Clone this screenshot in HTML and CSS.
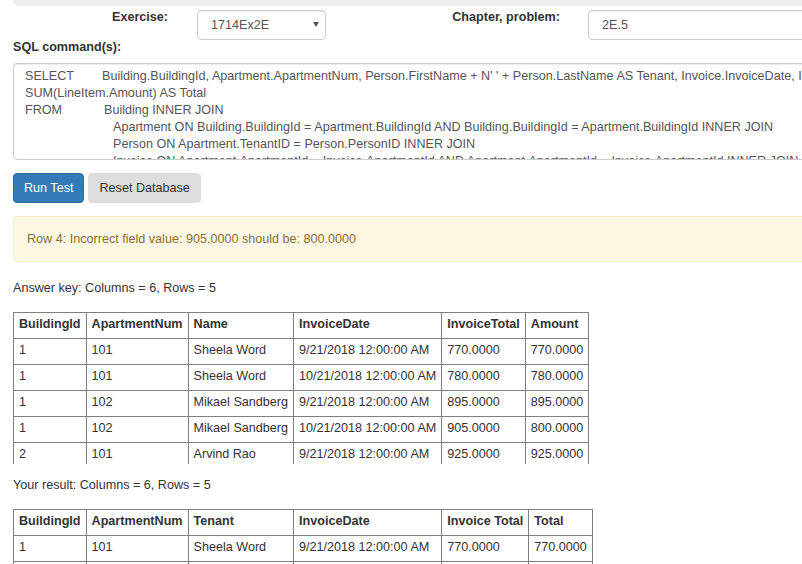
FILE: index.html
```html
<!DOCTYPE html>
<html lang="en">
<head>
<meta charset="utf-8">
<title>SQL Exercise</title>
<link rel="stylesheet" href="styles.css">
</head>
<body>
<div class="page">
  <div class="well-end"></div>
  <div class="form-row">
    <label class="label label-ex">Exercise:</label>
    <div class="select-wrap">
      <select class="select"><option>1714Ex2E</option></select>
      <svg class="caret" width="6" height="5" viewBox="0 0 6 5"><path d="M0 0H6L3 5Z" fill="#555"/></svg>
    </div>
    <label class="label label-ch">Chapter, problem:</label>
    <input class="input" type="text" value="2E.5">
  </div>
  <div class="sql-label">SQL command(s):</div>
  <div class="sql-box">
    <div class="ln"><span class="kw1">SELECT</span>Building.BuildingId, Apartment.ApartmentNum, Person.FirstName + N' ' + Person.LastName AS Tenant, Invoice.InvoiceDate, Invoice.InvoiceTotal AS [Invoice Total],</div>
    <div class="ln">SUM(LineItem.Amount) AS Total</div>
    <div class="ln"><span class="kw2">FROM</span>Building INNER JOIN</div>
    <div class="ln ind">Apartment ON Building.BuildingId = Apartment.BuildingId AND Building.BuildingId = Apartment.BuildingId INNER JOIN</div>
    <div class="ln ind">Person ON Apartment.TenantID = Person.PersonID INNER JOIN</div>
    <div class="ln ind">Invoice ON Apartment.ApartmentId = Invoice.ApartmentId AND Apartment.ApartmentId = Invoice.ApartmentId INNER JOIN</div>
  </div>
  <div class="btns">
    <button class="btn btn-primary">Run Test</button>
    <button class="btn btn-default">Reset Database</button>
  </div>
  <div class="alert">Row 4: Incorrect field value: 905.0000 should be: 800.0000</div>
  <div class="caption">Answer key: Columns = 6, Rows = 5</div>
  <div class="table-clip">
    <table class="grid">
      <tr><th>BuildingId</th><th>ApartmentNum</th><th>Name</th><th>InvoiceDate</th><th>InvoiceTotal</th><th>Amount</th></tr>
      <tr><td>1</td><td>101</td><td>Sheela Word</td><td>9/21/2018 12:00:00 AM</td><td>770.0000</td><td>770.0000</td></tr>
      <tr><td>1</td><td>101</td><td>Sheela Word</td><td>10/21/2018 12:00:00 AM</td><td>780.0000</td><td>780.0000</td></tr>
      <tr><td>1</td><td>102</td><td>Mikael Sandberg</td><td>9/21/2018 12:00:00 AM</td><td>895.0000</td><td>895.0000</td></tr>
      <tr><td>1</td><td>102</td><td>Mikael Sandberg</td><td>10/21/2018 12:00:00 AM</td><td>905.0000</td><td>800.0000</td></tr>
      <tr><td>2</td><td>101</td><td>Arvind Rao</td><td>9/21/2018 12:00:00 AM</td><td>925.0000</td><td>925.0000</td></tr>
    </table>
  </div>
  <div class="caption caption-2">Your result: Columns = 6, Rows = 5</div>
  <table class="grid">
    <tr><th>BuildingId</th><th>ApartmentNum</th><th>Tenant</th><th>InvoiceDate</th><th>Invoice Total</th><th>Total</th></tr>
    <tr><td>1</td><td>101</td><td>Sheela Word</td><td>9/21/2018 12:00:00 AM</td><td>770.0000</td><td>770.0000</td></tr>
    <tr><td>1</td><td>101</td><td>Sheela Word</td><td>10/21/2018 12:00:00 AM</td><td>780.0000</td><td>780.0000</td></tr>
    <tr><td>1</td><td>102</td><td>Mikael Sandberg</td><td>9/21/2018 12:00:00 AM</td><td>895.0000</td><td>895.0000</td></tr>
    <tr><td>1</td><td>102</td><td>Mikael Sandberg</td><td>10/21/2018 12:00:00 AM</td><td>905.0000</td><td>905.0000</td></tr>
    <tr><td>2</td><td>101</td><td>Arvind Rao</td><td>9/21/2018 12:00:00 AM</td><td>925.0000</td><td>925.0000</td></tr>
  </table>
</div>
</body>
</html>
```
FILE: styles.css
```css
html, body {
  margin: 0;
  padding: 0;
  overflow: hidden;
  background: #fff;
}
body {
  font-family: "Liberation Sans", Arial, sans-serif;
  font-size: 12.6px;
  line-height: 18px;
  color: #333;
}
.page {
  padding-left: 13px;
  width: 1000px;
}
.well-end {
  height: 6px;
  background: #eee;
  border-radius: 0 0 0 5px;
}
.form-row {
  display: flex;
  align-items: flex-start;
  margin-top: 2px;
}
.label {
  font-weight: bold;
  text-align: right;
  line-height: 18px;
}
.label-ex { width: 155px; }
.label-ch { width: 234px; }
.select-wrap {
  position: relative;
  margin-left: 29px;
  margin-top: 2px;
  width: 129px;
  height: 30px;
}
.select {
  -webkit-appearance: none;
  appearance: none;
  box-sizing: border-box;
  width: 100%;
  height: 30px;
  border: 1px solid #ccc;
  border-radius: 4px;
  background: #fff;
  color: #555;
  font: inherit;
  padding: 0 0 0 13px;
  box-shadow: inset 0 1px 1px rgba(0,0,0,.075);
  outline: none;
}
.caret {
  position: absolute;
  left: 116px;
  top: 12px;
}
.input {
  box-sizing: border-box;
  margin-left: 28px;
  margin-top: 2px;
  width: 400px;
  height: 30px;
  border: 1px solid #ccc;
  border-radius: 4px;
  color: #555;
  font: inherit;
  padding: 0 0 0 13px;
  box-shadow: inset 0 1px 1px rgba(0,0,0,.075);
  outline: none;
}
.sql-label {
  font-weight: bold;
  margin-top: -2px;
}
.sql-box {
  box-sizing: border-box;
  margin-top: 7px;
  height: 97px;
  border: 1px solid #ccc;
  border-radius: 4px;
  padding: 4px 0 0 11px;
  color: #555;
  line-height: 17px;
  overflow: hidden;
  white-space: nowrap;
  box-shadow: inset 0 1px 1px rgba(0,0,0,.075);
}
.kw1 { display: inline-block; width: 77px; }
.kw2 { display: inline-block; width: 79px; }
.ind { padding-left: 88px; }
.btns {
  display: flex;
  gap: 4px;
  margin-top: 13px;
}
.btn {
  font: inherit;
  line-height: 18px;
  padding: 5px 10px 5px;
  border-radius: 4px;
  border: 1px solid transparent;
  cursor: pointer;
}
.btn-primary {
  background: #337ab7;
  border-color: #2e6da4;
  color: #fff;
}
.btn-default {
  background: #ddd;
  border-color: #ddd;
  color: #333;
}
.alert {
  margin-top: 13px;
  background: #fcf8e3;
  border: 1px solid #faebcc;
  border-radius: 4px;
  color: #8a6d3b;
  padding: 13px 13px 13px;
}
.caption {
  margin-top: 17px;
}
.caption-2 {
  margin-top: 12px;
}
.table-clip {
  height: 152px;
  overflow: hidden;
  margin-top: 15px;
}
.grid {
  border-collapse: collapse;
  white-space: nowrap;
}
.caption-2 + .grid {
  margin-top: 15px;
}
.grid th, .grid td {
  border: 1px solid #808080;
  padding: 2px 5px 5px;
  text-align: left;
  line-height: 18px;
}
.grid th {
  font-weight: bold;
}
```
